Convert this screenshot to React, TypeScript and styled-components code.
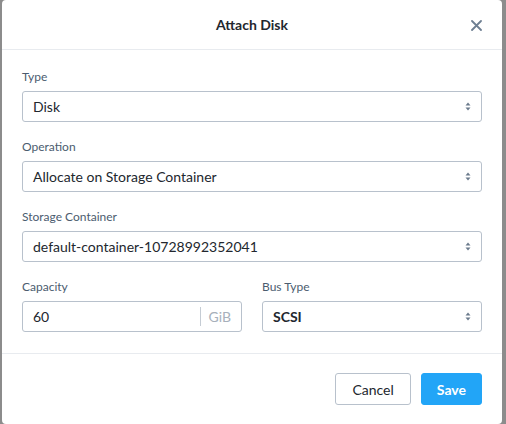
import React from "react";
import styled, { createGlobalStyle } from "styled-components";

const Global = createGlobalStyle`
  html, body { margin: 0; padding: 0; background: #8c8c8c; }
  body { font-family: Lato, "Open Sans", Arial, sans-serif; }
  * { box-sizing: border-box; }
`;

const Page = styled.div`
  width: 506px;
  height: 424px;
  padding: 0 4px 0 2px;
  background: #8c8c8c;
`;

const Modal = styled.div`
  width: 500px;
  height: 424px;
  background: #fff;
  border-radius: 4px;
  display: flex;
  flex-direction: column;
`;

const Header = styled.div`
  height: 50px;
  border-bottom: 1px solid #e8ebef;
  display: flex;
  align-items: center;
  justify-content: center;
  position: relative;
`;

const Title = styled.div`
  font-size: 14px;
  font-weight: 700;
  color: #22272e;
`;

const Close = styled.button`
  position: absolute;
  right: 19px;
  top: 18px;
  width: 14px;
  height: 14px;
  padding: 0;
  border: none;
  background: none;
  display: flex;
  align-items: center;
  justify-content: center;
`;

const Body = styled.div`
  padding: 20px 20px 3px 20px;
  border-bottom: 1px solid #e8ebef;
`;

const Row = styled.div`
  display: grid;
  grid-template-columns: 1fr 1fr;
  column-gap: 20px;
`;

const Group = styled.div`
  margin-bottom: 18px;
`;

const Label = styled.div`
  font-size: 12px;
  line-height: 14px;
  color: #4b5c6f;
  margin-bottom: 7px;
`;

const Box = styled.div`
  height: 31px;
  border: 1px solid #b8c1cc;
  border-radius: 3px;
  display: flex;
  align-items: center;
  padding: 0 10px 0 10px;
  font-size: 14px;
  color: #22272e;
`;

const Value = styled.span<{ $bold?: boolean }>`
  flex: 1;
  font-weight: ${(p) => (p.$bold ? 700 : 400)};
`;

const Unit = styled.span`
  border-left: 1px solid #c5ccd4;
  height: 19px;
  display: flex;
  align-items: center;
  padding-left: 8px;
  color: #a7b0bb;
  font-size: 14px;
`;

const Footer = styled.div`
  flex: 1;
  display: flex;
  justify-content: flex-end;
  align-items: flex-start;
  padding: 19px 20px 0;
  gap: 10px;
`;

const Button = styled.button<{ $primary?: boolean }>`
  height: 32px;
  padding: 0 ${(p) => (p.$primary ? "15px" : "16px")};
  border-radius: 3px;
  font-family: inherit;
  font-size: 14px;
  font-weight: ${(p) => (p.$primary ? 700 : 400)};
  border: 1px solid ${(p) => (p.$primary ? "#22a5f7" : "#b8c1cc")};
  background: ${(p) => (p.$primary ? "#22a5f7" : "#fff")};
  color: ${(p) => (p.$primary ? "#fff" : "#22272e")};
`;

const Chevrons = () => (
  <svg width="6" height="9" viewBox="0 0 6 9">
    <path d="M3 0.5 L5.5 3.5 H0.5 Z" fill="#6a7a8c" />
    <path d="M3 8.5 L5.5 5.5 H0.5 Z" fill="#6a7a8c" />
  </svg>
);

const Select = ({ value, bold }: { value: string; bold?: boolean }) => (
  <Box>
    <Value $bold={bold}>{value}</Value>
    <Chevrons />
  </Box>
);

export default function App() {
  return (
    <>
      <Global />
      <Page>
        <Modal>
          <Header>
            <Title>Attach Disk</Title>
            <Close aria-label="close">
              <svg width="11" height="11" viewBox="0 0 11 11">
                <path d="M1 1 L10 10 M10 1 L1 10" stroke="#6e7f92" strokeWidth="1.8" strokeLinecap="round" />
              </svg>
            </Close>
          </Header>
          <Body>
            <Group>
              <Label>Type</Label>
              <Select value="Disk" />
            </Group>
            <Group>
              <Label>Operation</Label>
              <Select value="Allocate on Storage Container" />
            </Group>
            <Group>
              <Label>Storage Container</Label>
              <Select value="default-container-10728992352041" />
            </Group>
            <Row>
              <Group>
                <Label>Capacity</Label>
                <Box>
                  <Value>60</Value>
                  <Unit>GiB</Unit>
                </Box>
              </Group>
              <Group>
                <Label>Bus Type</Label>
                <Select value="SCSI" bold />
              </Group>
            </Row>
          </Body>
          <Footer>
            <Button>Cancel</Button>
            <Button $primary>Save</Button>
          </Footer>
        </Modal>
      </Page>
    </>
  );
}
